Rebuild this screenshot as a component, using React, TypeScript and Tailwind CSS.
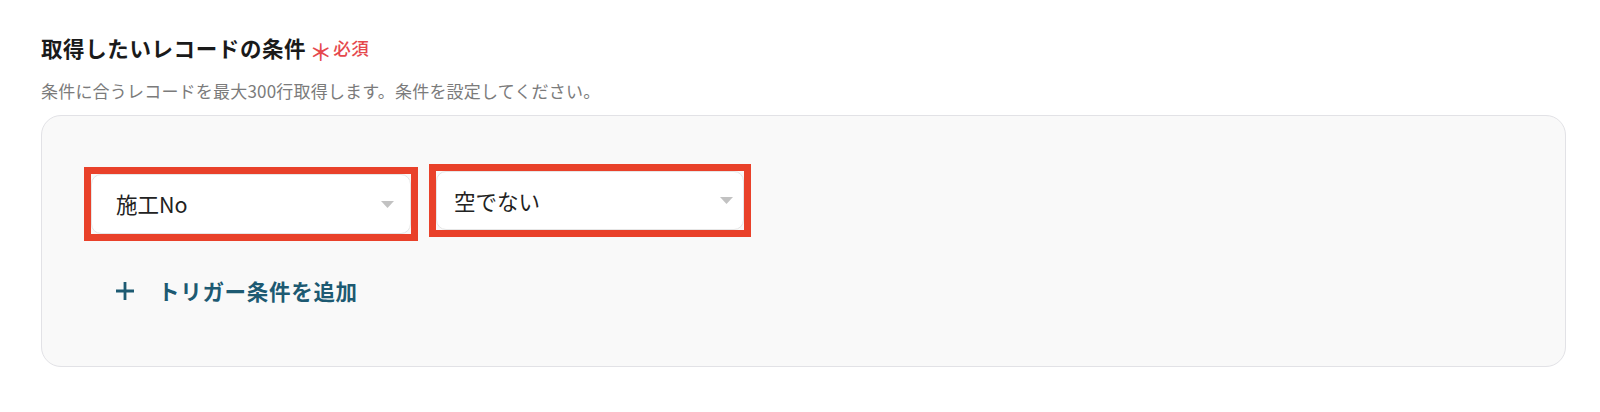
const FONT = { fontFamily: '"Noto Sans CJK JP", "Noto Sans", sans-serif' };

function Caret() {
  return (
    <svg width="13" height="7" viewBox="0 0 13 7" className="shrink-0">
      <path d="M0 0 H13 L6.5 7 Z" fill="#c2c2c2" />
    </svg>
  );
}

function MarkedSelect({
  label,
  className,
  padLeft,
  padRight,
}: {
  label: string;
  className: string;
  padLeft: string;
  padRight: string;
}) {
  return (
    <div className={`border-[7px] border-[#e9412a] bg-[#f9f9f9] ${className}`}>
      <div
        className={`flex h-full items-center justify-between rounded-[10px] border border-[#e6e6e6] bg-white ${padLeft} ${padRight}`}
      >
        <span className="text-[21.5px] leading-none text-[#222]">{label}</span>
        <Caret />
      </div>
    </div>
  );
}

export default function App() {
  return (
    <div className="min-h-[412px] bg-white pl-[41px] pr-[34px] pt-[32px]" style={FONT}>
      <div className="flex items-center">
        <h2 className="text-[21.5px] font-bold leading-[30px] tracking-[0.6px] text-[#1a1a1a]">
          取得したいレコードの条件
        </h2>
        <span className="ml-[3px] mt-[8px] text-[23px] font-medium leading-none text-[#e5484d]">＊</span>
        <span className="ml-[1px] text-[17.5px] font-medium leading-[30px] tracking-[0.6px] text-[#e5484d]">
          必須
        </span>
      </div>
      <p className="mt-[15px] text-[17px] leading-[26px] tracking-[0.2px] text-[#7b7b7b]">
        条件に合うレコードを最大300行取得します。条件を設定してください。
      </p>

      <div className="mt-[11px] rounded-[20px] border-[1.5px] border-[#e2e2e6] bg-[#f9f9f9] pb-[60px] pl-[42px] pt-[48px]">
        <div className="flex items-start gap-[11px]">
          <MarkedSelect label="施工No" className="mt-[3px] h-[74px] w-[334px]" padLeft="pl-[24px]" padRight="pr-[16px]" />
          <MarkedSelect label="空でない" className="h-[73px] w-[322px]" padLeft="pl-[17px]" padRight="pr-[10px]" />
        </div>

        <button className="ml-[31px] mt-[35px] flex items-center gap-[23px] text-[#1d5a72]">
          <svg width="20" height="20" viewBox="0 0 20 20">
            <path d="M10 1 V19 M1 10 H19" stroke="currentColor" strokeWidth="2.8" />
          </svg>
          <span className="text-[21.5px] font-semibold leading-[30px] tracking-[0.7px]">トリガー条件を追加</span>
        </button>
      </div>
    </div>
  );
}
